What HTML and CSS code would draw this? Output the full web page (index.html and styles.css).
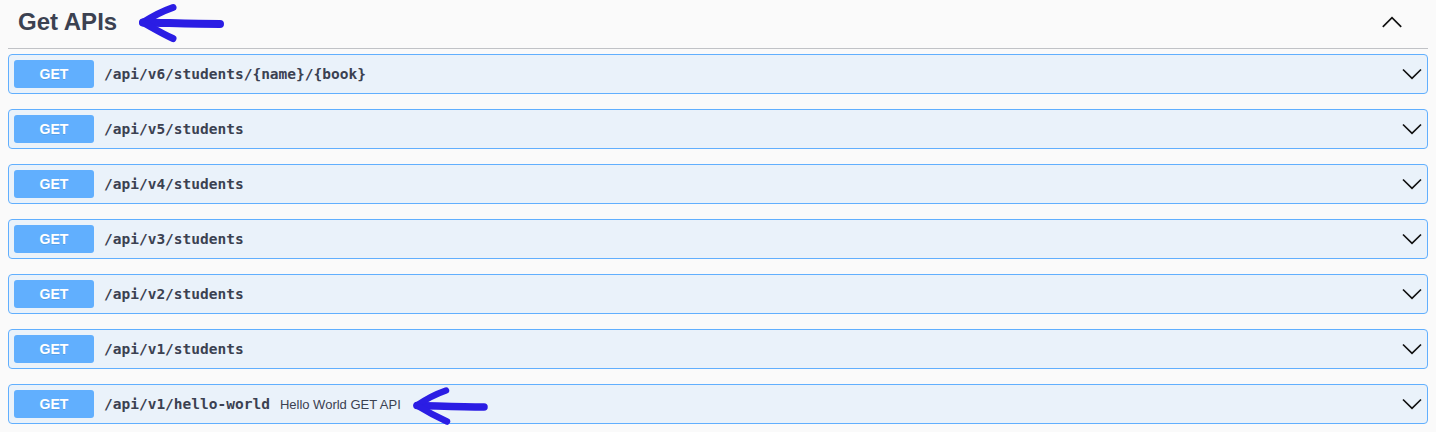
FILE: index.html
```html
<!DOCTYPE html>
<html>
<head>
<meta charset="utf-8">
<link rel="stylesheet" href="styles.css">
</head>
<body>
<div class="section">
  <div class="tag-header">
    <h3 class="tag-title">Get APIs</h3>
    <svg class="arrow arrow-title" width="90" height="40" viewBox="0 0 90 40">
      <path d="M4 19.5 C30 20 55 21 81 21" fill="none" stroke="#2b1de4" stroke-width="8" stroke-linecap="round"/>
      <path d="M4 19.5 C14 13 24 8 34 4.5" fill="none" stroke="#2b1de4" stroke-width="7" stroke-linecap="round"/>
      <path d="M4 19.5 C14 25 24 31 34 35.5" fill="none" stroke="#2b1de4" stroke-width="7" stroke-linecap="round"/>
    </svg>
    <svg class="chev-up" width="20" height="20" viewBox="0 0 20 20">
      <polyline points="0.8,13.8 10,4.6 19.2,13.8" fill="none" stroke="#111" stroke-width="1.7"/>
    </svg>
  </div>
  <div class="ops">
    <div class="op">
      <span class="method">GET</span>
      <span class="path">/api/v6/students/{name}/{book}</span>
      <svg class="chev-down" width="20" height="20" viewBox="0 0 20 20"><polyline points="1,5.5 10,14.3 19,5.5" fill="none" stroke="#111" stroke-width="1.7"/></svg>
    </div>
    <div class="op">
      <span class="method">GET</span>
      <span class="path">/api/v5/students</span>
      <svg class="chev-down" width="20" height="20" viewBox="0 0 20 20"><polyline points="1,5.5 10,14.3 19,5.5" fill="none" stroke="#111" stroke-width="1.7"/></svg>
    </div>
    <div class="op">
      <span class="method">GET</span>
      <span class="path">/api/v4/students</span>
      <svg class="chev-down" width="20" height="20" viewBox="0 0 20 20"><polyline points="1,5.5 10,14.3 19,5.5" fill="none" stroke="#111" stroke-width="1.7"/></svg>
    </div>
    <div class="op">
      <span class="method">GET</span>
      <span class="path">/api/v3/students</span>
      <svg class="chev-down" width="20" height="20" viewBox="0 0 20 20"><polyline points="1,5.5 10,14.3 19,5.5" fill="none" stroke="#111" stroke-width="1.7"/></svg>
    </div>
    <div class="op">
      <span class="method">GET</span>
      <span class="path">/api/v2/students</span>
      <svg class="chev-down" width="20" height="20" viewBox="0 0 20 20"><polyline points="1,5.5 10,14.3 19,5.5" fill="none" stroke="#111" stroke-width="1.7"/></svg>
    </div>
    <div class="op">
      <span class="method">GET</span>
      <span class="path">/api/v1/students</span>
      <svg class="chev-down" width="20" height="20" viewBox="0 0 20 20"><polyline points="1,5.5 10,14.3 19,5.5" fill="none" stroke="#111" stroke-width="1.7"/></svg>
    </div>
    <div class="op">
      <span class="method">GET</span>
      <span class="path">/api/v1/hello-world</span>
      <span class="desc">Hello World GET API</span>
      <svg class="arrow arrow-desc" width="80" height="38" viewBox="0 0 80 38">
        <path d="M4 18.5 C25 19 48 20 71 20" fill="none" stroke="#2b1de4" stroke-width="7.5" stroke-linecap="round"/>
        <path d="M4 18.5 C13 12 23 7 33 3.5" fill="none" stroke="#2b1de4" stroke-width="6.5" stroke-linecap="round"/>
        <path d="M4 18.5 C13 24 24 30 34 34.5" fill="none" stroke="#2b1de4" stroke-width="6.5" stroke-linecap="round"/>
      </svg>
      <svg class="chev-down" width="20" height="20" viewBox="0 0 20 20"><polyline points="1,5.5 10,14.3 19,5.5" fill="none" stroke="#111" stroke-width="1.7"/></svg>
    </div>
  </div>
</div>
</body>
</html>
```
FILE: styles.css
```css
html, body {
  margin: 0;
  padding: 0;
  background: #fafafa;
}
body {
  font-family: "Liberation Sans", Arial, sans-serif;
  color: #3b4151;
}
.section {
  padding: 0 8px;
}
.tag-header {
  display: flex;
  align-items: center;
  height: 49px;
  box-sizing: border-box;
  padding: 0 26px 4px 10px;
  border-bottom: 1px solid rgba(59, 65, 81, 0.3);
}
.tag-title {
  margin: 0;
  font-size: 24px;
  font-weight: bold;
  color: #3b4151;
}
.arrow-title {
  margin-left: 22px;
  margin-top: 2px;
}
.chev-up {
  margin-left: auto;
  margin-top: 2px;
}
.ops {
  padding-top: 5px;
}
.op {
  display: flex;
  align-items: center;
  height: 40px;
  box-sizing: border-box;
  padding: 0 5px;
  margin-bottom: 15px;
  border: 1px solid #61affe;
  border-radius: 4px;
  background: rgba(97, 175, 254, 0.1);
}
.method {
  width: 80px;
  height: 28px;
  line-height: 28px;
  text-align: center;
  background: #61affe;
  color: #fff;
  font-weight: bold;
  font-size: 14px;
  border-radius: 3px;
  margin-right: 10px;
  text-shadow: 0 1px 0 rgba(0,0,0,0.1);
}
.path {
  font-family: "DejaVu Sans Mono", "Liberation Mono", monospace;
  font-weight: bold;
  font-size: 14.5px;
  color: #3b4151;
}
.desc {
  font-size: 13px;
  margin-left: 10px;
  color: #3b4151;
}
.arrow-desc {
  margin-left: 12px;
  margin-top: 4px;
}
.chev-down {
  margin-left: auto;
}
```
